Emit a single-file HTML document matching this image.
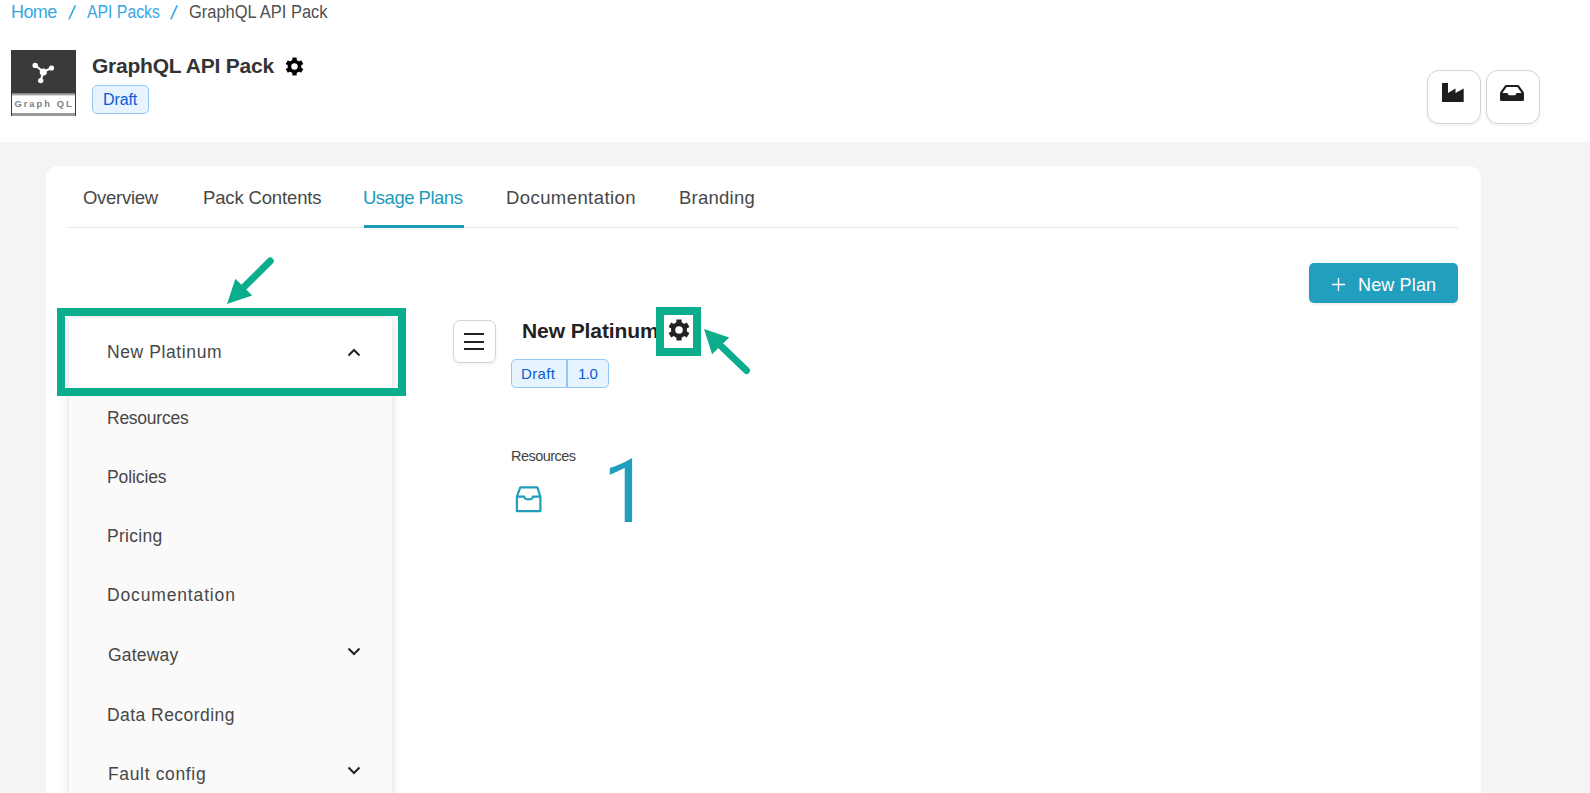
<!DOCTYPE html>
<html>
<head>
<meta charset="utf-8">
<style>
*{box-sizing:border-box;margin:0;padding:0}
html,body{width:1590px;height:793px;overflow:hidden;background:#fff}
body{position:relative;font-family:"Liberation Sans",sans-serif;color:#333}
.a{position:absolute;white-space:nowrap;line-height:1}
#graybg{position:absolute;left:0;top:142px;width:1590px;height:651px;background:#f4f4f4}
#card{position:absolute;left:46px;top:166px;width:1435px;height:700px;background:#fff;border-radius:12px}
.bc{font-size:18px;color:#38a8e4}
.tab{font-size:18.5px;color:#474747}
.side{font-size:17.5px;color:#474747}
.btn{position:absolute;border:1px solid #d4d4d4;border-radius:12px;background:#fff;box-shadow:0 2px 3px rgba(0,0,0,0.06)}
.badge{position:absolute;background:#e7f3fe;border:1px solid #90c8f9;color:#0b5bd6}
.g{position:absolute;border:8px solid #0bad8d}
</style>
</head>
<body>
<!-- breadcrumb -->
<span class="a bc" style="left:11px;top:2.8px;letter-spacing:-0.6px">Home</span>
<svg class="a" style="left:0;top:0" width="200" height="24"><path d="M75.4 5.3L69 19.3M177.2 5.3L170.8 19.3" stroke="#38a8e4" stroke-width="1.6"/></svg>
<span class="a bc" style="left:87px;top:2.8px;transform:scaleX(0.878);transform-origin:0 0">API Packs</span>

<span class="a bc" style="left:189px;top:2.8px;transform:scaleX(0.915);transform-origin:0 0;color:#505050">GraphQL API Pack</span>

<!-- logo -->
<div style="position:absolute;left:11px;top:50px;width:65px;height:66px;background:#3a3a3a;overflow:hidden">
  <div style="position:absolute;left:1.3px;top:43px;width:62.5px;height:20px;background:linear-gradient(#6e6e6e 0,#bdbdbd 2px,#fff 3.2px,#fff 100%)"></div>
  <div style="position:absolute;left:1.3px;top:63px;width:62.5px;height:3px;background:#999"></div>
  <svg style="position:absolute;left:0;top:0" width="65" height="43" viewBox="0 0 65 43">
    <g fill="#fff" stroke="#fff" stroke-width="2" stroke-linecap="round">
      <line x1="24.2" y1="15.4" x2="32.3" y2="21.8"/>
      <line x1="40.5" y1="18" x2="32.3" y2="21.8"/>
      <line x1="32.3" y1="21.8" x2="29.7" y2="30.6"/>
    </g>
    <g fill="#fff">
      <circle cx="24.2" cy="15.4" r="2.7"/>
      <circle cx="40.5" cy="18" r="2.6"/>
      <circle cx="29.7" cy="30.6" r="2.7"/>
      <circle cx="32.3" cy="22" r="3.6"/>
    </g>
  </svg>
  <span class="a" style="left:3.4px;top:50px;font-size:9.3px;font-weight:bold;color:#808080;letter-spacing:2.05px">Graph QL</span>
</div>

<!-- title -->
<span class="a" style="left:92px;top:55.4px;font-size:21px;font-weight:bold;color:#333;letter-spacing:-0.23px">GraphQL API Pack</span>
<svg class="a" style="left:284.5px;top:57px" width="19" height="19" viewBox="-10 -10 20 20" id="gear1">
  <g fill="#000">
    <circle r="7.2"/>
    <rect x="-2.3" y="-9.4" width="4.6" height="18.8"/>
    <rect x="-2.3" y="-9.4" width="4.6" height="18.8" transform="rotate(60)"/>
    <rect x="-2.3" y="-9.4" width="4.6" height="18.8" transform="rotate(120)"/>
  </g>
  <circle r="3.4" fill="#fff"/>
</svg>
<div class="badge" style="left:92px;top:85px;width:57px;height:29px;border-radius:5px"></div>
<span class="a" style="left:103px;top:92.2px;font-size:16px;color:#0b5bd6;letter-spacing:-0.1px">Draft</span>

<!-- top right buttons -->
<div class="btn" style="left:1427px;top:70px;width:54px;height:54px">
  <svg style="position:absolute;left:13px;top:11px" width="24" height="21" viewBox="0 0 24 21">
    <path d="M1 1H7V11L14.5 6.6V11L22.7 6.6V20H1Z" fill="#1e1e1e"/>
  </svg>
</div>
<div class="btn" style="left:1486px;top:70px;width:54px;height:54px">
  <svg style="position:absolute;left:11px;top:12px" width="28" height="20" viewBox="0 0 28 20">
    <path d="M6.5 3.2Q7 2 8.3 2H19.7Q21 2 21.5 3.2L26 9.5V16.5Q26 18 24.5 18H3.5Q2 18 2 16.5V9.5ZM8.6 4L4.4 10H9.5L10.6 12.2H17.4L18.5 10H23.6L19.4 4Z" fill="#1e1e1e" fill-rule="evenodd"/>
  </svg>
</div>

<div id="graybg"></div>
<div id="card"></div>

<!-- tabs -->
<span class="a tab" style="left:83px;top:189.2px;letter-spacing:-0.28px">Overview</span>
<span class="a tab" style="left:203px;top:189.2px;letter-spacing:-0.15px">Pack Contents</span>
<span class="a tab" style="left:363px;top:189.2px;letter-spacing:-0.5px;color:#1e9bbb">Usage Plans</span>
<span class="a tab" style="left:506px;top:189.2px;letter-spacing:0.42px">Documentation</span>
<span class="a tab" style="left:679px;top:189.2px;letter-spacing:0.25px">Branding</span>
<div style="position:absolute;left:68px;top:227px;width:1390px;height:1px;background:#e6e6e6"></div>
<div style="position:absolute;left:364px;top:225px;width:100px;height:3px;background:#1e9bbb"></div>

<!-- new plan button -->
<div style="position:absolute;left:1309px;top:263px;width:149px;height:40px;background:#229ebe;border-radius:5px;box-shadow:0 2px 2px rgba(0,0,0,0.08)"></div>
<svg class="a" style="left:1331px;top:277px" width="15" height="15" viewBox="0 0 15 15"><path d="M1 7.5H14M7.5 1V14" stroke="#fff" stroke-width="1.4"/></svg>
<span class="a" style="left:1358px;top:275.5px;font-size:18px;color:#fff;letter-spacing:0.15px">New Plan</span>

<!-- sidebar -->
<div style="position:absolute;left:69px;top:318px;width:322.5px;height:500px;background:#fafafa;box-shadow:0 0 9px rgba(0,0,0,0.15)"></div>
<div style="position:absolute;left:69px;top:318px;width:322.5px;height:66px;background:#fff"></div>
<span class="a side" style="left:107px;top:344.4px;letter-spacing:0.6px">New Platinum</span>
<svg class="a" style="left:346px;top:346px" width="16" height="12" viewBox="0 0 16 12"><path d="M2.5 9.5L8 4L13.5 9.5" fill="none" stroke="#222" stroke-width="2"/></svg>
<span class="a side" style="left:107px;top:409.8px;letter-spacing:-0.25px">Resources</span>
<span class="a side" style="left:107px;top:468.8px;letter-spacing:-0.1px">Policies</span>
<span class="a side" style="left:107px;top:527.5px;letter-spacing:0.27px">Pricing</span>
<span class="a side" style="left:107px;top:587px;letter-spacing:0.85px">Documentation</span>
<span class="a side" style="left:108px;top:647px;letter-spacing:0.2px">Gateway</span>
<svg class="a" style="left:346px;top:645px" width="16" height="12" viewBox="0 0 16 12"><path d="M2.5 3.5L8 9L13.5 3.5" fill="none" stroke="#222" stroke-width="2"/></svg>
<span class="a side" style="left:107px;top:706.6px;letter-spacing:0.45px">Data Recording</span>
<span class="a side" style="left:108px;top:765.6px;letter-spacing:0.65px">Fault config</span>
<svg class="a" style="left:346px;top:764px" width="16" height="12" viewBox="0 0 16 12"><path d="M2.5 3.5L8 9L13.5 3.5" fill="none" stroke="#222" stroke-width="2"/></svg>

<!-- green box sidebar -->
<div class="g" style="left:57px;top:308px;width:349px;height:88px"></div>
<svg class="a" style="left:0;top:0" width="800" height="400" viewBox="0 0 800 400">
  <g fill="#0bad8d" stroke="#0bad8d">
    <line x1="244" y1="287" x2="270.2" y2="261" stroke-width="7" stroke-linecap="round"/>
    <polygon points="227,304 235.4,278.8 252.2,295.4" stroke-width="0"/>
    <line x1="722" y1="347" x2="746.5" y2="370.5" stroke-width="7" stroke-linecap="round"/>
    <polygon points="704,329 729.2,337.5 712.1,354.2" stroke-width="0"/>
  </g>
</svg>

<!-- hamburger -->
<div style="position:absolute;left:453px;top:320px;width:43px;height:43px;border:1px solid #d4d4d4;border-radius:7px;background:#fff;box-shadow:0 2px 3px rgba(0,0,0,0.06)"></div>
<div style="position:absolute;left:464px;top:333px;width:20px;height:2px;background:#222"></div>
<div style="position:absolute;left:464px;top:340.7px;width:20px;height:2px;background:#222"></div>
<div style="position:absolute;left:464px;top:348px;width:20px;height:2px;background:#222"></div>

<!-- plan heading -->
<span class="a" style="left:522px;top:320px;font-size:21px;font-weight:bold;color:#222;letter-spacing:-0.09px">New Platinum</span>
<div class="g" style="left:656px;top:307px;width:45px;height:49px;background:#fff"></div>
<svg class="a" style="left:668px;top:319px" width="22" height="22" viewBox="-11 -11 22 22">
  <g fill="#222">
    <circle r="8"/>
    <rect x="-2.6" y="-10.5" width="5.2" height="21"/>
    <rect x="-2.6" y="-10.5" width="5.2" height="21" transform="rotate(60)"/>
    <rect x="-2.6" y="-10.5" width="5.2" height="21" transform="rotate(120)"/>
  </g>
  <circle r="3.8" fill="#fff"/>
</svg>

<div class="badge" style="left:511px;top:359px;width:98px;height:29px;border-radius:5px"></div>
<div style="position:absolute;left:566px;top:359px;width:2px;height:29px;background:#90c8f9"></div>
<span class="a" style="left:521px;top:366px;font-size:15px;color:#0b5bd6;letter-spacing:0.35px">Draft</span>
<span class="a" style="left:578px;top:366px;font-size:15px;color:#0b5bd6;letter-spacing:-0.5px">1.0</span>

<!-- resources stat -->
<span class="a" style="left:511px;top:448.5px;font-size:14.5px;color:#444;letter-spacing:-0.55px">Resources</span>
<svg class="a" style="left:514px;top:485px" width="29" height="29" viewBox="0 0 29 29">
  <path d="M2.9 11.7L6.3 2.4H23.4L26.4 11.7V26.2H2.9Z M2.9 11.7H10.3C10.5 15.2 18.6 15.2 18.8 11.7H26.4" fill="none" stroke="#219ebc" stroke-width="2.2" stroke-linejoin="round"/>
</svg>
<svg class="a" style="left:0;top:0" width="700" height="540" viewBox="0 0 700 540"><path d="M632.1 457.9V521.9H624.7V467.7Q618 471.6 609.8 474.7V468Q622.5 463.8 632.1 457.9Z" fill="#219ebc"/></svg>
</body>
</html>
